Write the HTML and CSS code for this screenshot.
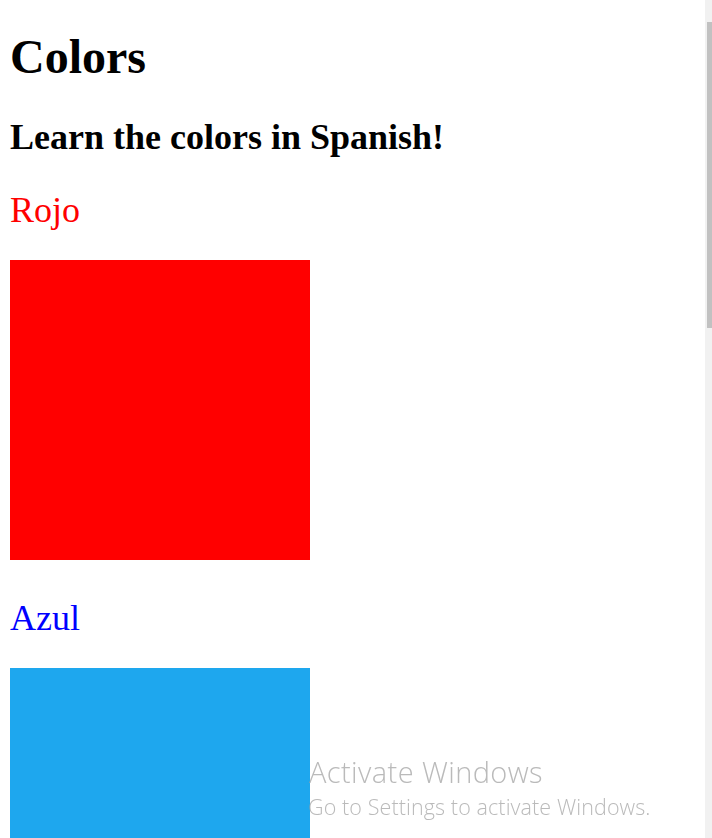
FILE: index.html
```html
<!DOCTYPE html>
<html lang="en">
<head>
<meta charset="utf-8">
<title>Colors</title>
<link rel="stylesheet" href="styles.css">
</head>
<body>
<main class="page">
  <h1 class="title">Colors</h1>
  <h2 class="subtitle">Learn the colors in Spanish!</h2>
  <section class="color">
    <p class="color-name red-text">Rojo</p>
    <div class="swatch red"></div>
  </section>
  <section class="color">
    <p class="color-name blue-text">Azul</p>
    <div class="swatch blue"></div>
  </section>
</main>
<div class="scrollbar"><div class="thumb"></div></div>
<div class="watermark">
  <div class="wm-title">Activate Windows</div>
  <div class="wm-sub">Go to Settings to activate Windows.</div>
</div>
</body>
</html>
```
FILE: styles.css
```css
html, body {
  margin: 0;
  padding: 0;
  overflow: hidden;
  background: #ffffff;
}
body {
  font-family: "Liberation Serif", "Times New Roman", serif;
  color: #000;
}
.page {
  padding: 0 10px;
}
.title {
  font-size: 48px;
  line-height: 1.2;
  font-weight: bold;
  margin: 28px 0 0;
}
.subtitle {
  font-size: 36px;
  line-height: 1.2;
  font-weight: bold;
  margin: 30.15px 0 30.3px;
}
.color + .color {
  margin-top: 37.25px;
}
.color-name {
  font-size: 36px;
  line-height: 1.2;
  margin: 0 0 27.55px;
}
.red-text { color: #ff0000; }
.blue-text { color: #0000ff; }
.swatch {
  width: 300px;
  height: 300px;
}
.red { background: #ff0000; }
.blue { background: #1ea7ee; }

.scrollbar {
  position: fixed;
  top: 0;
  right: 0;
  width: 7px;
  height: 100%;
  background: #f1f1f1;
}
.thumb {
  position: absolute;
  top: 22px;
  right: 0;
  width: 5px;
  height: 306px;
  background: #c1c1c1;
}
.watermark {
  position: fixed;
  left: 309px;
  top: 751.75px;
  font-family: "Open Sans", "Noto Sans", sans-serif;
  color: rgba(160, 160, 160, 0.72);
  pointer-events: none;
}
.wm-title {
  font-size: 29px;
  line-height: 40px;
  font-weight: 300;
  letter-spacing: 0.4px;
}
.wm-sub {
  font-size: 21.5px;
  line-height: 26px;
  font-weight: 300;
  margin-top: 2px;
  margin-left: -1px;
  letter-spacing: 0.1px;
}
```
